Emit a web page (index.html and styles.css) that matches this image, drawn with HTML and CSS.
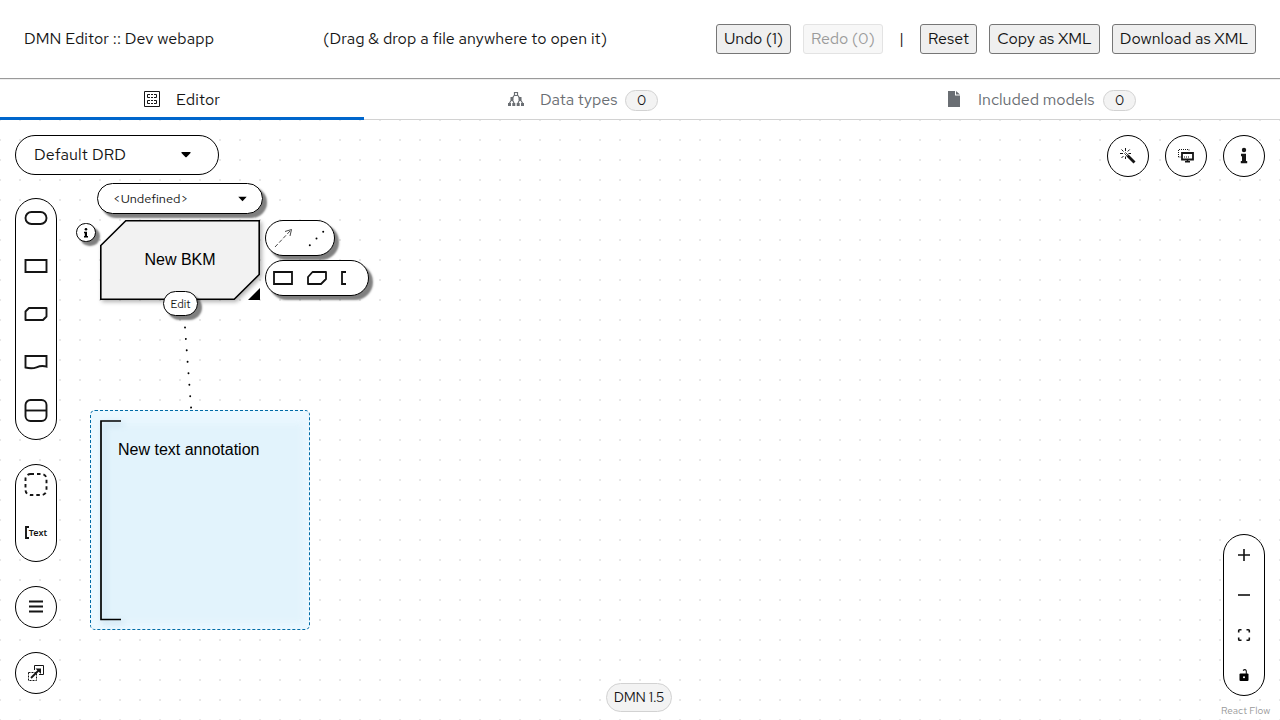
FILE: index.html
```html
<!DOCTYPE html>
<html lang="en">
<head>
<meta charset="utf-8">
<title>DMN Editor :: Dev webapp</title>
<link rel="stylesheet" href="styles.css">
</head>
<body>
<header class="topbar">
  <span class="title">DMN Editor :: Dev webapp</span>
  <span class="hint">(Drag &amp; drop a file anywhere to open it)</span>
  <div class="actions">
    <button class="btn undo">Undo (1)</button>
    <button class="btn redo" disabled>Redo (0)</button>
    <span class="sep">|</span>
    <button class="btn reset">Reset</button>
    <button class="btn copy">Copy as XML</button>
    <button class="btn download">Download as XML</button>
  </div>
</header>
<nav class="tabs">
  <div class="tab tab-editor active">
    <svg class="tab-icon" width="16" height="16" viewBox="0 0 16 16" fill="none" stroke="currentColor"><path d="M.5.5h15v15H.5z"/><path d="M3.500 6.500v-3H6M7 3.500h2M10 3.500h2.500v3H10M6 6.500H3.500M7 6.500h2M3.500 12.500v-3H6M7 9.500h2M10 9.500h2.500v3H10M7 12.500h2M6 12.500H3.500"/></svg>
    <span class="t-editor">Editor</span>
  </div>
  <div class="tab tab-types">
    <svg class="tab-icon" width="16" height="16" viewBox="0 0 16 16"><path d="M6.500 1.500h3v3h-3zM6.500 4 4 7.500M9.500 4 12 7.500M4 8l-2.500 4M4 8l2 4M12 8l-2 4M12 8l2.500 4" fill="none" stroke="currentColor" stroke-width="1.200"/><path d="M2.500 6h3v3h-3zM10.500 6h3v3h-3zM0 12h3v3H0zM4.300 12h3v3h-3zM8.700 12h3v3h-3zM13 12h3v3h-3z" fill="currentColor"/></svg>
    <span class="t-types">Data types</span><span class="badge">0</span>
  </div>
  <div class="tab tab-models">
    <svg class="tab-icon" width="16" height="16" viewBox="0 0 16 16"><path d="M2 0h7v4.500h5V16H2zM10 0l4 3.500h-4z" fill="currentColor"/></svg>
    <span class="t-models">Included models</span><span class="badge">0</span>
  </div>
</nav>
<main class="canvas">
  <svg class="edge" width="20" height="100" viewBox="0 0 20 100"><path d="M5 9.400 11.200 91" stroke="#000" stroke-width="1.900" stroke-linecap="round" stroke-dasharray=".1 11.380"/></svg>

  <section class="annotation">
    <div class="annotation-fill"></div>
    <svg class="bracket" width="24" height="204" viewBox="0 0 24 204"><path d="M21 1H1v198.500h20" fill="none" stroke="#000" stroke-width="1.700"/></svg>
    <span class="annotation-text">New text annotation</span>
  </section>

  <section class="bkm">
    <svg class="bkm-shape" width="160" height="80" viewBox="0 0 160 80"><path d="M.8 25.500 25.800.8h133.400v53.700l-25 24.700H.8z" fill="#f2f2f2" stroke="#000" stroke-width="1.600"/></svg>
    <span class="bkm-text">New BKM</span>
    <svg class="resize" width="12" height="12"><path d="M12 0v12H0z"/></svg>
  </section>
  <div class="pill type-select"><span>&lt;Undefined&gt;</span><svg width="9" height="6"><path d="M.3.800h8.400L4.500 5.200z"/></svg></div>
  <div class="pill node-info"><svg width="6" height="10" viewBox="0 0 6 10"><circle cx="3" cy="1.300" r="1.300"/><path d="M1 3.700h3v4.300h1v1.500H1V8h.8V5.200H1z"/></svg></div>
  <div class="pill edit">Edit</div>
  <div class="pill edges-bar">
    <svg width="20" height="20" viewBox="0 0 20 20" fill="none" stroke="#333" stroke-width=".9"><path d="M1 19 17 2" stroke-dasharray="4 2"/><path d="m11 3.500 6.500-2-1.500 6.500"/></svg>
    <svg width="18" height="18" viewBox="0 0 18 18"><circle cx="1.800" cy="16.200" r="1"/><circle cx="8.500" cy="9.400" r="1"/><circle cx="15.200" cy="2.700" r="1"/></svg>
  </div>
  <div class="pill nodes-bar">
    <svg width="20" height="14" viewBox="0 0 20 14"><path d="M1 1h18v12H1z"/></svg>
    <svg width="20" height="14" viewBox="0 0 20 14"><path d="M5.500 1H19v7l-5 5H1V6z" stroke-linejoin="round"/></svg>
    <svg width="6" height="14" viewBox="0 0 6 14"><path d="M5 1H1v12h4"/></svg>
  </div>

  <div class="pill drd-select"><span>Default DRD</span><svg width="10" height="6"><path d="M.5 1Q0 0 1 0h8q1 0 .5 1L5.700 5Q5 5.500 4.300 5z"/></svg></div>

  <aside class="left-tools">
    <div class="pill palette">
      <svg width="24" height="24" viewBox="0 0 24 24"><rect x="1.500" y="6" width="21" height="12" rx="6"/></svg>
      <svg width="24" height="24" viewBox="0 0 24 24"><path d="M1.500 6h21v12h-21z"/></svg>
      <svg width="24" height="24" viewBox="0 0 24 24"><path d="M5 6h17.500v8.500L19 18H1.500V9.500z" stroke-linejoin="round"/></svg>
      <svg width="24" height="24" viewBox="0 0 24 24"><path d="M1.500 6h21v10.700c-3-1-6-1-10 .6s-8 1-11 .2z"/></svg>
      <svg width="24" height="24" viewBox="0 0 24 24"><rect x="1.500" y="2" width="21" height="21" rx="5"/><path d="M1.500 12.500h21"/></svg>
    </div>
    <div class="pill extras">
      <svg width="24" height="24" viewBox="0 0 24 24"><rect x="1.500" y="2" width="21" height="21" rx="5" stroke-dasharray="3.500 3"/></svg>
      <div class="text-icon"><svg width="4" height="14" viewBox="0 0 4 14"><path d="M4 1H1v11h3"/></svg><span>Text</span></div>
    </div>
    <div class="pill round"><svg width="14" height="14" viewBox="0 0 14 14"><path d="M0 1.500h14M0 6.500h14M0 11.500h14" stroke="#151515" stroke-width="2.200"/></svg></div>
    <div class="pill round"><svg width="16" height="16" viewBox="0 0 16 16" fill="none" stroke="#151515"><path d="M6.500 5V.5h9v9H11"/><path d="M.5 7.500h8v8h-8z" stroke-dasharray="2 1"/><path d="m3 13 7.500-7.500" stroke-width="1.800"/><path d="M7.500 3.500H13V9z" fill="#151515" stroke="none"/></svg></div>
  </aside>

  <aside class="right-tools">
    <div class="pill round"><svg width="16" height="16" viewBox="0 0 16 16" stroke="#151515" fill="none"><path d="m7.500 7.500 7 7" stroke-width="2.800"/><path d="m4.300 5.300 3 3M5.300 4.300l3 3" stroke-width=".8"/><path d="M5.500 0v3M1.500 1.500l2 2M0 5.500h3M1.500 10l2-2M5.500 8.500V11M7.700 3.500l2-2M8.500 5.500h2.500"/></svg></div>
    <div class="pill round"><svg width="16" height="14" viewBox="0 0 16 14" fill="none" stroke="#151515"><path d="M.5 8V.5H11v2" stroke-dasharray="1 1"/><path d="M.5 8h3" stroke-dasharray="1 1"/><path d="M4 4h11v6.500H4z" stroke-width="1.800"/><path d="M6 8h5" stroke-dasharray="1 1"/><path d="M7 12.700h5M9.500 10v3" stroke-width="1.500"/></svg></div>
    <div class="pill round"><svg width="8" height="16" viewBox="0 0 8 16" fill="#151515"><circle cx="4" cy="2" r="2.200"/><path d="M1 5.700h5v7.300h1.200v2.300H.8V13H2V8.200H1z"/></svg></div>
  </aside>

  <aside class="pill zoom-tools">
    <svg width="12" height="12" viewBox="0 0 12 12"><path d="M0 6h12M6 0v12"/></svg>
    <svg width="12" height="12" viewBox="0 0 12 12"><path d="M0 6h12"/></svg>
    <svg width="12" height="12" viewBox="0 0 12 12"><path d="M.7 3.500V1.500q0-.8.8-.8h2M8.500.7h2q.8 0 .8.800v2M11.300 8.500v2q0 .8-.8.800h-2M3.500 11.300h-2q-.8 0-.8-.8v-2"/></svg>
    <svg width="12" height="12" viewBox="0 0 12 12"><path d="M2.500 4.500h7q1 0 1 1V11q0 1-1 1h-7q-1 0-1-1V5.500q0-1 1-1z" fill="#000" stroke="none"/><path d="M5 1.500q2.500-2 3.300.5V5" stroke-width="1.100"/><circle cx="6" cy="8.300" r="1" fill="#fff" stroke="none"/></svg>
  </aside>
  <div class="version">DMN 1.5</div>
  <div class="attribution">React Flow</div>
</main>
</body>
</html>
```

FILE: styles.css
```css
* { box-sizing: border-box; }
body { margin: 0; width: 1280px; height: 720px; overflow: hidden; display: flex; flex-direction: column; background: #fff; color: #151515; font: 16px/24px "Red Hat Text", Lato, "Open Sans", sans-serif; }
svg { display: block; flex: none; overflow: visible; }
span { white-space: nowrap; }
.topbar { height: 80px; flex: none; padding: 0 24px 2px; display: flex; align-items: center; border-bottom: 1px solid #eee; box-shadow: inset 0 -1px #9a9a9a; }
.title { width: 299px; letter-spacing: .085px; }
.hint { flex: 1; letter-spacing: .085px; }
.actions { display: flex; align-items: center; gap: 12px; }
.btn { height: 30px; padding: 0; border: 1px solid #767676; border-radius: 3px; background: #efefef; color: #151515; font: inherit; line-height: 26px; white-space: nowrap; }
.btn:disabled { color: #9c9c9c; border-color: #e3e3e3; background: #f7f7f7; }
.undo { width: 75px; letter-spacing: -.15px; }
.redo { width: 80px; letter-spacing: -.1px; }
.reset { width: 57px; }
.copy { width: 111px; }
.download { width: 144px; }
.sep { width: 13px; text-align: center; }
.tabs { display: flex; flex: none; height: 40px; }
.tab { display: flex; align-items: center; justify-content: center; border-bottom: 1px solid #d2d2d2; color: #6a6e73; padding-top: 1px; }
.tab-icon { margin-right: 16px; position: relative; top: -1px; }
.tab-editor { width: 364px; }
.tab-types { width: 438px; }
.tab-models { width: 478px; }
.active { color: #151515; border-bottom: 3px solid #06c; padding-top: 3px; }
.t-editor { width: 44px; letter-spacing: .15px; }
.t-types { width: 77px; }
.t-models { width: 117px; }
.badge { width: 33px; height: 21px; margin-left: 8px; border: 1px solid #d2d2d2; border-radius: 11px; background: #f3f3f3; color: #151515; font-size: 14px; line-height: 19px; text-align: center; }
.canvas { position: relative; height: 600px; overflow: hidden; background: conic-gradient(from 90deg at 18px 18px, #e8e8e8 90deg, #fff 0) 1px 1px / 20px 20px; }
.pill { display: flex; align-items: center; background: #fff; border: 1px solid #000; border-radius: 30px; }
.edge { position: absolute; left: 180px; top: 198px; }
.annotation { position: absolute; left: 90px; top: 290px; width: 220px; height: 220px; border: 1px dashed #006ba6; border-radius: 5px; background: #ebf8ff; }
.annotation-fill { position: absolute; inset: 12px 6px 6px 12px; background: #e2f3fc; filter: blur(3px); }
.bracket { position: absolute; left: 9px; top: 9px; filter: drop-shadow(3px 3px 3px rgba(90, 150, 185, .4)); }
.annotation-text { position: absolute; left: 27px; top: 27px; color: #000; font: 16px/24px "Liberation Sans", sans-serif; }
.bkm { position: absolute; left: 100px; top: 100px; width: 160px; height: 80px; display: flex; align-items: center; justify-content: center; }
.bkm-shape { position: absolute; left: 0; top: 0; filter: drop-shadow(2px 2px 2px rgba(0, 0, 0, .3)); }
.bkm-text { position: relative; color: #000; font: 16px/24px "Liberation Sans", sans-serif; }
.resize { position: absolute; left: 148px; top: 68px; }
.type-select, .node-info, .edit, .edges-bar, .nodes-bar { position: absolute; box-shadow: 4px 4px 2px rgba(0, 0, 0, .5); }
.type-select { left: 97px; top: 63px; width: 166px; height: 31px; padding: 0 15px; justify-content: space-between; font-size: 12.8px; }
.node-info { left: 76px; top: 103px; width: 20px; height: 19px; justify-content: center; }
.edit { left: 163px; top: 171px; width: 35px; height: 25px; justify-content: center; font-size: 11.2px; }
.edges-bar { left: 265px; top: 100px; width: 70px; height: 36px; padding-left: 8px; gap: 14px; }
.nodes-bar { left: 265px; top: 140px; width: 104px; height: 36px; padding-left: 7px; gap: 14px; }
.nodes-bar svg { fill: none; stroke: #111; stroke-width: 1.8; }
.drd-select { position: absolute; left: 15px; top: 15px; width: 204px; height: 40px; padding: 0 27px 0 18px; justify-content: space-between; letter-spacing: .18px; }
.left-tools { position: absolute; left: 15px; top: 78px; width: 42px; display: flex; flex-direction: column; gap: 24px; }
.palette { height: 242px; padding-top: 7px; flex-direction: column; gap: 24px; }
.palette svg, .extras svg { fill: none; stroke: #151515; stroke-width: 1.9; }
.extras { height: 98px; padding-top: 7px; flex-direction: column; gap: 24px; }
.text-icon { display: flex; height: 25px; align-items: center; gap: 0; font: 600 9px/24px "Noto Sans", sans-serif; }
.round { width: 42px; height: 42px; justify-content: center; }
.right-tools { position: absolute; right: 15px; top: 15px; display: flex; gap: 16px; }
.zoom-tools { position: absolute; right: 15px; top: 414px; width: 42px; height: 162px; padding-top: 14px; flex-direction: column; gap: 28px; }
.zoom-tools svg { fill: none; stroke: #111; stroke-width: 1.6; }
.version { position: absolute; left: 606px; top: 563px; width: 66px; height: 29px; border: 1px solid #d2d2d2; border-radius: 15px; background: #f3f3f3; font-size: 14px; line-height: 27px; letter-spacing: -.2px; text-align: center; }
.attribution { position: absolute; left: 1221px; top: 584px; color: #999; font-size: 10px; line-height: 14px; white-space: nowrap; }
```
